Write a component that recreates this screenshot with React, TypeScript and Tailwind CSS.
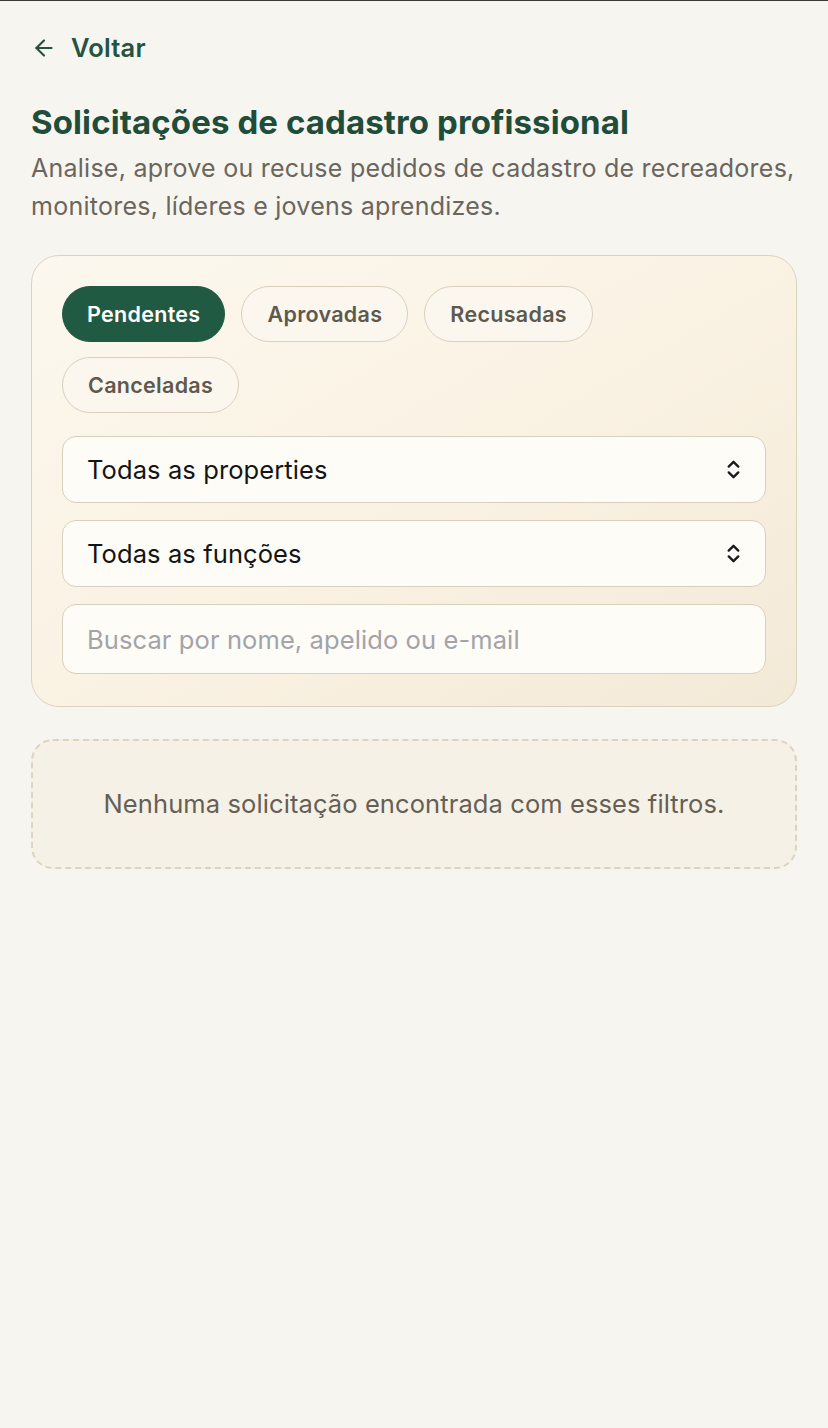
import { useState } from "react";
import { ArrowLeft, ChevronsUpDown } from "lucide-react";

const TABS = ["Pendentes", "Aprovadas", "Recusadas", "Canceladas"];

function SelectBox({ label }: { label: string }) {
  return (
    <div className="flex h-[67px] items-center justify-between rounded-[14px] border border-[#d9cfbd] bg-[#fdfcf7] pl-[24px] pr-[20px]">
      <span className="text-[25.5px] tracking-[0.1px] text-[#141414]">{label}</span>
      <ChevronsUpDown className="h-[23px] w-[23px] text-[#1a1a1a]" strokeWidth={2.4} />
    </div>
  );
}

export default function App() {
  const [tab, setTab] = useState("Pendentes");

  return (
    <div
      className="min-h-[1428px] border-t border-[#3b3a36] bg-[#f7f5f0] px-[31px] pt-[28px]"
      style={{ fontFamily: "Inter, 'Noto Sans', sans-serif" }}
    >
      <button className="flex items-center gap-[14px] text-[#24533f]">
        <ArrowLeft className="h-[26px] w-[26px]" strokeWidth={2} />
        <span className="text-[25.5px] font-semibold tracking-[0.2px]">Voltar</span>
      </button>

      <h1 className="mt-[35px] text-[33px] font-bold leading-[40px] tracking-[0.1px] text-[#1f4d3a]">
        Solicitações de cadastro profissional
      </h1>
      <p className="mt-[7px] text-[25px] leading-[38px] tracking-[0.25px] text-[#6b665c]">
        Analise, aprove ou recuse pedidos de cadastro de recreadores, monitores, líderes e jovens aprendizes.
      </p>

      <div className="mt-[30px] rounded-[28px] border border-[#ddd2bd] bg-gradient-to-br from-[#fcf8ef] via-[#faf2e3] to-[#f3e9d7] p-[30px] pb-[32px]">
        <div className="flex flex-wrap gap-x-[16px] gap-y-[15px]">
          {TABS.map((t) => {
            const active = t === tab;
            return (
              <button
                key={t}
                onClick={() => setTab(t)}
                className={
                  active
                    ? "h-[56px] rounded-full border border-[#215a43] bg-[#215a43] px-[24px] text-[21.5px] font-semibold tracking-[0.3px] text-white"
                    : "h-[56px] rounded-full border border-[#d9cfbc] bg-[#fbf7ee] px-[25px] text-[21.5px] font-semibold tracking-[0.3px] text-[#5e594f]"
                }
              >
                {t}
              </button>
            );
          })}
        </div>

        <div className="mt-[23px] flex flex-col gap-[17px]">
          <SelectBox label="Todas as properties" />
          <SelectBox label="Todas as funções" />
          <input
            placeholder="Buscar por nome, apelido ou e-mail"
            className="h-[70px] rounded-[14px] border border-[#d9cfbd] bg-[#fdfcf7] px-[24px] text-[25.5px] tracking-[0.1px] text-[#141414] outline-none placeholder:text-[#a3a3a8]"
          />
        </div>
      </div>

      <div className="mt-[32px] flex h-[130px] items-center justify-center rounded-[22px] border-2 border-dashed border-[#ddd3c1] bg-[#f6f1e6]">
        <p className="text-[25.5px] tracking-[0.1px] text-[#655f55]">Nenhuma solicitação encontrada com esses filtros.</p>
      </div>
    </div>
  );
}
